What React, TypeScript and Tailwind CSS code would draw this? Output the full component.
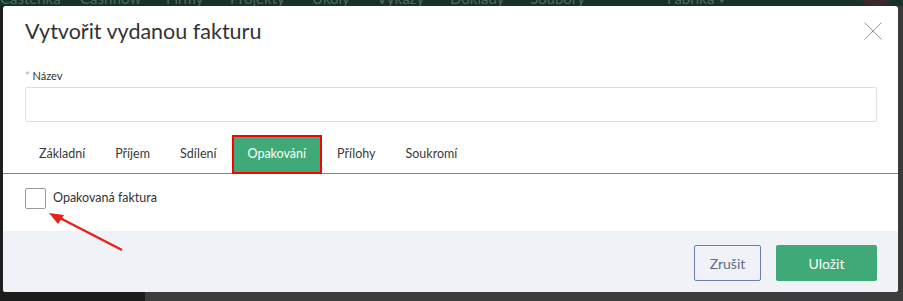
const navItems = [
  { label: "Částenka", w: "w-[80px]" },
  { label: "Cashflow", w: "w-[86px]" },
  { label: "Firmy", w: "w-[64px]" },
  { label: "Projekty", w: "w-[82px]" },
  { label: "Úkoly", w: "w-[65px]" },
  { label: "Výkazy", w: "w-[73px]" },
  { label: "Doklady", w: "w-[80px]" },
  { label: "Soubory", w: "w-[137px]" },
  { label: "Fabrika ▾", w: "w-[200px]" },
];

const tabs = ["Základní", "Příjem", "Sdílení", "Opakování", "Přílohy", "Soukromí"];

export default function App() {
  return (
    <div className="relative h-[301px] w-[903px] overflow-hidden bg-[#3c3c3c] font-['Lato','Noto_Sans',sans-serif]">
      {/* Stránka pod dialogem */}
      <div className="flex h-[6px] overflow-hidden bg-[#16322a]">
        {navItems.map((item) => (
          <div key={item.label} className={`${item.w} shrink-0 -mt-[10px] text-[15px] leading-[16px] text-[#4d6a5c]`}>
            {item.label}
          </div>
        ))}
        <div className="ml-[-5px] mt-[-10px] h-[16px] w-[28px] rounded-full bg-[#3a2a2a]"></div>
      </div>

      <div className="flex h-[286px]">
        <div className="w-[3px] bg-[#1c1f1e]"></div>

        {/* Dialog */}
        <div className="flex w-[895px] flex-col rounded-[3px] bg-white">
          {/* Hlavička */}
          <div className="flex items-start justify-between pl-[22px] pr-[16px] pt-[11px]">
            <h1 className="text-[21.5px] leading-[28px] text-[#333]">Vytvořit vydanou fakturu</h1>
            <svg className="mt-[5px]" width="18" height="18" viewBox="0 0 18 18">
              <path d="M0.5 0.5 L17.5 17.5 M17.5 0.5 L0.5 17.5" stroke="#9a9a9a" strokeWidth="1" fill="none" />
            </svg>
          </div>

          {/* Tělo */}
          <div className="mt-[24px] px-[22px]">
            <div className="text-[11px] leading-[14px] text-[#333]">
              <span className="text-[#c9a0a0]">*</span> Název
            </div>
            <div className="mt-[4px] h-[35px] w-[852px] rounded-[2px] border border-[#dcdfe4]"></div>
          </div>

          {/* Záložky */}
          <div className="mt-[13px] flex h-[39px] items-end border-b border-[#3fa978] pl-[21px]">
            {tabs.map((tab) =>
              tab === "Opakování" ? (
                <div
                  key={tab}
                  className="-mb-px flex h-[39px] items-center border-2 border-[#ff0000] bg-[#3fa978] px-[14px] text-[12.5px] text-white"
                >
                  {tab}
                </div>
              ) : (
                <div key={tab} className="flex h-[38px] items-center px-[15px] text-[12.5px] text-[#3a3a3a]">
                  {tab}
                </div>
              )
            )}
          </div>

          {/* Opakování */}
          <div className="mt-[14px] flex items-center gap-[7px] px-[22px]">
            <div className="h-[21px] w-[21px] rounded-[2px] border border-[#9a9a9a]"></div>
            <span className="text-[12.5px] text-[#333]">Opakovaná faktura</span>
          </div>

          {/* Patička */}
          <div className="mt-auto flex h-[61px] items-start justify-end gap-[15px] rounded-b-[3px] bg-[#eff2f7] pr-[21px] pt-[14px]">
            <button className="h-[36px] w-[67px] rounded-[2px] border border-[#6b80a8] bg-[#eff2f7] text-[14px] text-[#5d6c8c]">
              Zrušit
            </button>
            <button className="h-[36px] w-[101px] rounded-[2px] bg-[#3fa978] text-[14px] text-white">
              Uložit
            </button>
          </div>
        </div>

        <div className="w-[5px] bg-[#3a3a3a]"></div>
      </div>

      <div className="flex h-[9px]">
        <div className="w-[145px] bg-[#1b1b1b]"></div>
        <div className="flex-1 bg-[#3d3d3d]"></div>
      </div>

      {/* Šipka */}
      <svg className="absolute left-0 top-0" width="903" height="301">
        <line x1="122" y1="250" x2="58" y2="217" stroke="#e8201a" strokeWidth="2.5" />
        <polygon points="49,213 64,215 58,224" fill="#e8201a" />
      </svg>
    </div>
  );
}
